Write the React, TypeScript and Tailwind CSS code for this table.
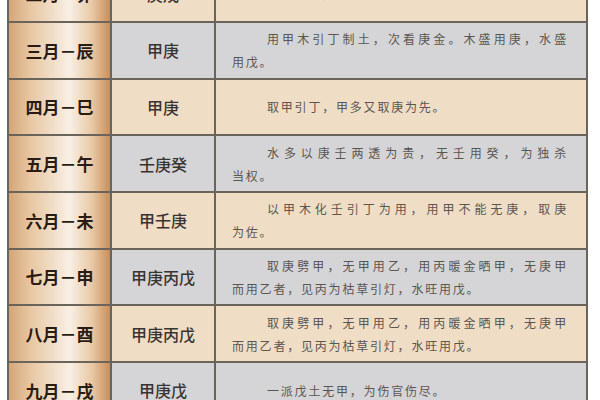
type Row = {
  month: string;
  stems: string;
  lines: string[];
  tone: "peach" | "grey";
};

const rows: Row[] = [
  { month: "二月－卯", stems: "庚戊", lines: ["羊刃驾杀，专用庚金。"], tone: "peach" },
  {
    month: "三月－辰",
    stems: "甲庚",
    lines: ["用甲木引丁制土，次看庚金。木盛用庚，水盛", "用戊。"],
    tone: "grey",
  },
  { month: "四月－巳", stems: "甲庚", lines: ["取甲引丁，甲多又取庚为先。"], tone: "peach" },
  {
    month: "五月－午",
    stems: "壬庚癸",
    lines: ["水多以庚壬两透为贵，无壬用癸，为独杀", "当权。"],
    tone: "grey",
  },
  {
    month: "六月－未",
    stems: "甲壬庚",
    lines: ["以甲木化壬引丁为用，用甲不能无庚，取庚", "为佐。"],
    tone: "peach",
  },
  {
    month: "七月－申",
    stems: "甲庚丙戊",
    lines: ["取庚劈甲，无甲用乙，用丙暖金晒甲，无庚甲", "而用乙者，见丙为枯草引灯，水旺用戊。"],
    tone: "grey",
  },
  {
    month: "八月－酉",
    stems: "甲庚丙戊",
    lines: ["取庚劈甲，无甲用乙，用丙暖金晒甲，无庚甲", "而用乙者，见丙为枯草引灯，水旺用戊。"],
    tone: "peach",
  },
  { month: "九月－戌", stems: "甲庚戊", lines: ["一派戊土无甲，为伤官伤尽。"], tone: "grey" },
];

export default function App() {
  return (
    <div className="h-[400px] w-[600px] overflow-hidden bg-white font-['Noto_Sans_CJK_SC',sans-serif]">
      <div className="-mt-[33.67px] ml-[7px] w-[581px] border-x-2 border-[#6b645a]">
        {rows.map((row) => (
          <div
            key={row.month}
            className={
              row.tone === "peach"
                ? "grid h-[56.67px] grid-cols-[103px_104px_1fr] border-b-2 border-[#6b645a] bg-[#f0ddc6]"
                : "grid h-[56.67px] grid-cols-[103px_104px_1fr] border-b-2 border-[#6b645a] bg-[#d5d5d8]"
            }
          >
            {/* Month column, gold gradient */}
            <div className="flex items-center justify-center border-r-2 border-[#6b645a] bg-[linear-gradient(90deg,#d4a679_0%,#e8c8a4_22%,#f8efe4_60%,#e9c9a6_82%,#c98e58_100%)] text-[17px] font-bold text-[#2a1c12]">
              {row.month}
            </div>
            <div className="flex items-center justify-center border-r-2 border-[#6b645a] text-[16px] font-medium text-[#3a3430]">
              {row.stems}
            </div>
            <div className="flex flex-col justify-center pl-4 pr-[18px] text-[12px] leading-[23px] tracking-[1.8px] text-[#5b5650]">
              {row.lines.map((line, i) => (
                <p
                  key={i}
                  className={
                    i === 0 && row.lines.length > 1
                      ? "indent-[35px] text-justify [text-align-last:justify]"
                      : i === 0
                        ? "indent-[35px]"
                        : ""
                  }
                >
                  {line}
                </p>
              ))}
            </div>
          </div>
        ))}
      </div>
    </div>
  );
}
